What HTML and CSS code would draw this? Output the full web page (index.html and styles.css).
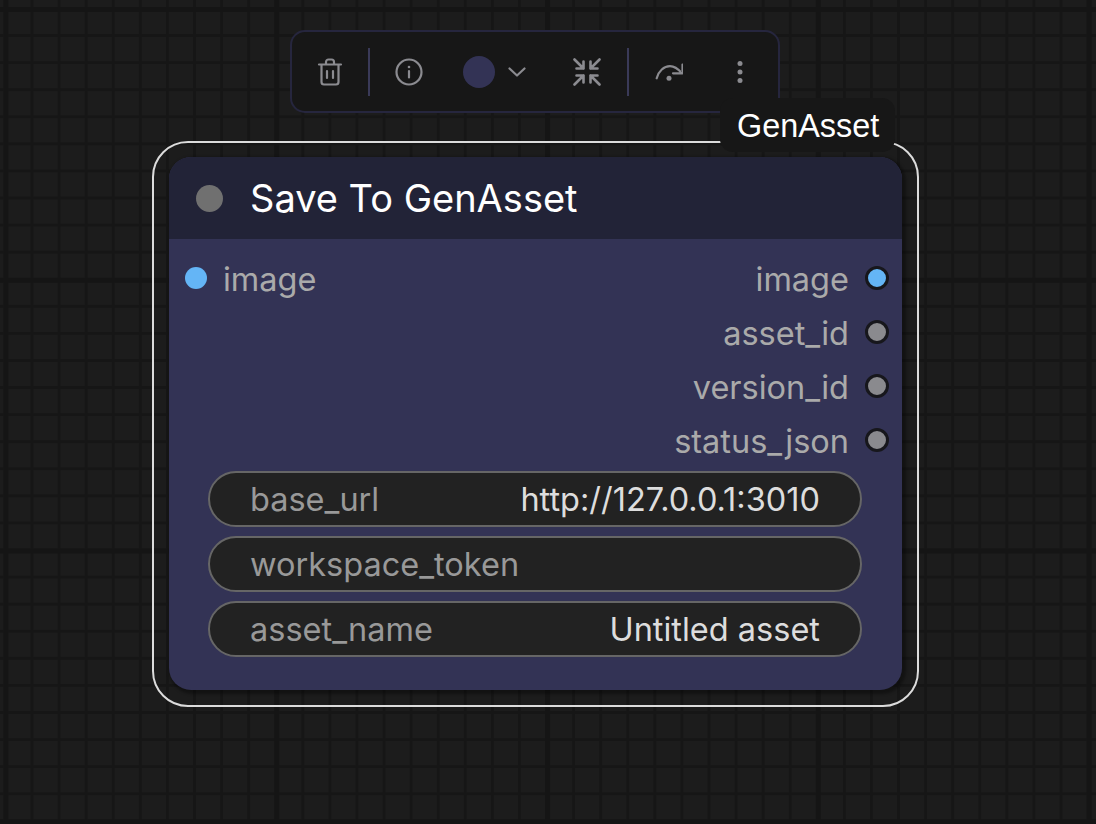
FILE: index.html
```html
<!DOCTYPE html>
<html lang="en">
<head>
    <meta charset="UTF-8">
    <title>GenAsset</title>
    <link rel="stylesheet" href="styles.css">
</head>
<body>
    <div class="canvas">
        <div class="toolbar">
            <button class="tool-btn">
                <svg width="26" height="28" viewBox="0 0 26 28">
                    <path d="M2 6.500h22M9 6V4a2.500 2.500 0 0 1 2.500-2.500h3A2.500 2.500 0 0 1 17 4v2M4.500 7v17a2.500 2.500 0 0 0 2.500 2.500h12a2.500 2.500 0 0 0 2.500-2.500V7M10 13v7M16 13v7"/>
                </svg>
            </button>
            <span class="sep"></span>
            <button class="tool-btn">
                <svg width="28" height="28" viewBox="0 0 28 28">
                    <circle cx="14" cy="14" r="12.500"/>
                    <path d="M14 13v6.500"/>
                    <circle class="fill" cx="14" cy="9" r="1.300"/>
                </svg>
            </button>
            <div class="color-pick">
                <span class="swatch"></span>
                <svg width="18" height="10" viewBox="0 0 18 10">
                    <path d="M1.500 1.500 9 8.500l7.500-7"/>
                </svg>
            </div>
            <button class="tool-btn collapse">
                <svg width="28" height="28" viewBox="0 0 28 28">
                    <path d="M1.500 1.500 10.500 10.500M10.500 3.500V10.500H3.500M26.500 1.500 17.500 10.500M17.500 3.500V10.500h7M1.500 26.500 10.500 17.500M10.500 24.500V17.500H3.500M26.500 26.500 17.500 17.500M17.500 24.500V17.500h7"/>
                </svg>
            </button>
            <span class="sep sep-right"></span>
            <button class="tool-btn">
                <svg width="28" height="20" viewBox="0 0 28 20">
                    <path d="M1.700 16.300C3.500 9 9 4.200 15 4.200c4 0 8 2.600 12 7.100M27.500 2.500v8.800H18"/>
                    <circle class="fill" cx="14" cy="16.300" r="2.500"/>
                </svg>
            </button>
            <button class="tool-btn more">
                <svg width="8" height="24" viewBox="0 0 8 24">
                    <circle class="fill" cx="4" cy="3.500" r="2.500"/>
                    <circle class="fill" cx="4" cy="12" r="2.500"/>
                    <circle class="fill" cx="4" cy="20.500" r="2.500"/>
                </svg>
            </button>
        </div>

        <div class="node-outline">
            <div class="badge">GenAsset</div>
            <div class="node">
                <div class="node-title">
                    <span class="title-dot"></span>
                    <span>Save To GenAsset</span>
                </div>
                <div class="node-body">
                    <div class="slot">
                        <div class="slot-in"><span class="dot dot-image"></span><span class="label">image</span></div>
                        <div class="slot-out"><span class="label">image</span><span class="dot dot-image ringed"></span></div>
                    </div>
                    <div class="slot">
                        <div class="slot-out"><span class="label">asset_id</span><span class="dot ringed"></span></div>
                    </div>
                    <div class="slot">
                        <div class="slot-out"><span class="label">version_id</span><span class="dot ringed"></span></div>
                    </div>
                    <div class="slot">
                        <div class="slot-out"><span class="label">status_json</span><span class="dot ringed"></span></div>
                    </div>
                    <div class="widgets">
                        <div class="widget"><span>base_url</span><span class="value">http://127.0.0.1:3010</span></div>
                        <div class="widget"><span>workspace_token</span></div>
                        <div class="widget"><span>asset_name</span><span class="value">Untitled asset</span></div>
                    </div>
                </div>
            </div>
        </div>
    </div>
</body>
</html>
```

FILE: styles.css
```css
* {
    box-sizing: border-box;
    font-family: "Inter", "Liberation Sans", sans-serif;
    font-optical-sizing: none;
}

body {
    margin: 0;
    background: #1c1c1c;
    overflow: hidden;
}

.canvas {
    position: relative;
    width: 1096px;
    height: 824px;
    background-color: #1c1c1c;
    background-image:
        linear-gradient(90deg, #151515 5px, transparent 5px),
        linear-gradient(#151515 5px, transparent 5px),
        linear-gradient(90deg, #161616 3px, transparent 3px),
        linear-gradient(#161616 3px, transparent 3px);
    background-size: 270.8px 270.8px, 270.8px 270.8px, 27.08px 27.08px, 27.08px 27.08px;
    background-position: 3.5px 0, 0 7px, 3.5px 0, 0 7px;
}

/* floating toolbar */
.toolbar {
    position: absolute;
    left: 290px;
    top: 30px;
    width: 490px;
    height: 83px;
    display: flex;
    align-items: center;
    padding: 0 14px;
    background: #171717;
    border: 2px solid #26263e;
    border-radius: 15px;
}

.tool-btn {
    flex: none;
    width: 48px;
    height: 48px;
    display: flex;
    align-items: center;
    justify-content: center;
    padding: 0;
    background: none;
    border: none;
}

.toolbar svg {
    fill: none;
    stroke: #8b8b90;
    stroke-width: 2.2;
    stroke-linecap: round;
    stroke-linejoin: round;
}

.toolbar svg .fill {
    fill: #8b8b90;
    stroke: none;
}

.collapse svg {
    stroke-width: 2.6;
}

.sep {
    flex: none;
    width: 2px;
    height: 48px;
    margin: 0 15px 0 14px;
    background: #3a3a58;
}

.sep-right {
    margin: 0 16px;
}

.color-pick {
    flex: none;
    display: flex;
    align-items: center;
    gap: 13px;
    margin-left: 30px;
}

.swatch {
    width: 32px;
    height: 32px;
    border-radius: 50%;
    background: #333355;
}

.collapse {
    margin-left: 37px;
}

.more {
    margin-left: 23px;
}

/* node */
.node-outline {
    position: absolute;
    left: 152px;
    top: 141px;
    width: 767px;
    height: 566px;
    padding: 14px 15px;
    border: 2px solid #dcdcdc;
    border-radius: 36px;
}

.badge {
    position: absolute;
    top: -45px;
    right: 22px;
    width: 175px;
    height: 54px;
    padding-left: 17px;
    background: #171717;
    border-radius: 13px;
    color: #fff;
    font-family: "Liberation Sans", sans-serif;
    font-size: 32.4px;
    line-height: 57px;
}

.node {
    height: 533px;
    border-radius: 22px;
    overflow: hidden;
    background: #333355;
    box-shadow: 2px 2px 3px 2px rgba(0, 0, 0, 0.35);
}

.node-title {
    display: flex;
    align-items: center;
    gap: 27px;
    height: 82px;
    padding-left: 27px;
    background: #222337;
    color: #fff;
    font-size: 38px;
}

.title-dot {
    width: 27px;
    height: 27px;
    border-radius: 50%;
    background: #707070;
}

.node-body {
    padding-top: 12px;
}

.slot {
    display: flex;
    align-items: center;
    justify-content: flex-end;
    height: 54px;
    color: #aaaaaa;
    font-size: 32.5px;
}

.label {
    padding-top: 2px;
}

.slot-in {
    display: flex;
    align-items: center;
    gap: 16px;
    margin-right: auto;
    padding-left: 16px;
}

.slot-out {
    display: flex;
    align-items: center;
    gap: 16px;
    padding-right: 13px;
}

.dot {
    width: 22px;
    height: 22px;
    border-radius: 50%;
    background: #8a8a8e;
}

.dot-image {
    background: #64b5f6;
}

.ringed {
    width: 24px;
    height: 24px;
    border: 3px solid #17171c;
}

.widgets {
    display: flex;
    flex-direction: column;
    gap: 9px;
    width: 654px;
    margin: 4px 0 0 39px;
}

.widget {
    display: flex;
    align-items: center;
    justify-content: space-between;
    height: 56px;
    padding: 0 40px;
    background: #222222;
    border: 2.5px solid #666666;
    border-radius: 28px;
    color: #999999;
    font-size: 32.5px;
}

.value {
    color: #dddddd;
}
```
